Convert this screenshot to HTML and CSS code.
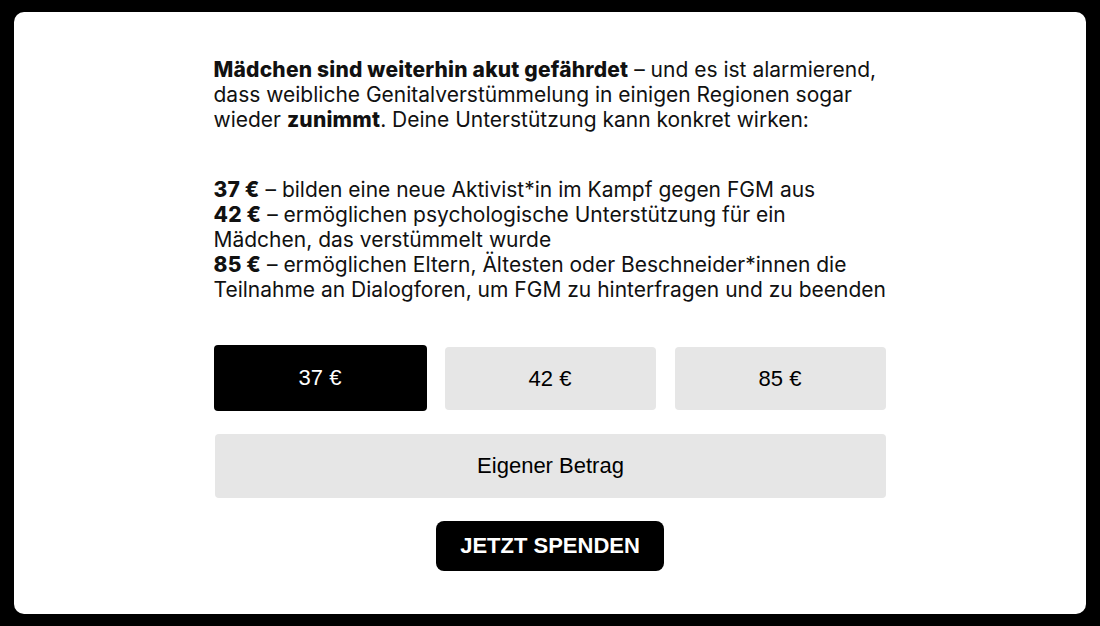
FILE: index.html
```html
<!DOCTYPE html>
<html lang="de">
<head>
    <meta charset="UTF-8" />
    <meta name="viewport" content="width=device-width, initial-scale=1.0"/>
    <title>Jetzt spenden</title>
    <link rel="stylesheet" href="styles.css">
</head>
<body>
    <div class="card">
        <div class="donate">
            <p class="intro"><strong>Mädchen sind weiterhin akut gefährdet</strong> – und es ist alarmierend, dass weibliche Genitalverstümmelung in einigen Regionen sogar wieder <strong>zunimmt</strong>. Deine Unterstützung kann konkret wirken:</p>
            <p class="impact">
                <strong>37 €</strong> – bilden eine neue Aktivist*in im Kampf gegen FGM aus<br>
                <strong>42 €</strong> – ermöglichen psychologische Unterstützung für ein Mädchen, das verstümmelt wurde<br>
                <strong>85 €</strong> – ermöglichen Eltern, Ältesten oder Beschneider*innen die Teilnahme an Dialogforen, um FGM zu hinterfragen und zu beenden
            </p>
            <div class="amounts">
                <button class="amount active">37 €</button>
                <button class="amount">42 €</button>
                <button class="amount">85 €</button>
            </div>
            <button class="amount custom">Eigener Betrag</button>
            <button class="submit">JETZT SPENDEN</button>
        </div>
    </div>
</body>
</html>
```

FILE: styles.css
```css
* {
    margin: 0;
    padding: 0;
    box-sizing: border-box;
}

body {
    background: #000;
    height: 626px;
    padding: 12px 14px;
    font-family: 'Inter', 'Liberation Sans', sans-serif;
    color: #111;
}

.card {
    background: #fff;
    border-radius: 10px;
    height: 602px;
    display: flex;
    justify-content: center;
    padding-top: 45px;
}

.donate {
    width: 673px;
    display: flex;
    flex-direction: column;
    align-items: center;
}

.intro,
.impact {
    width: 100%;
    font-size: 21px;
    line-height: 25px;
}

.intro strong,
.impact strong {
    font-weight: 800;
    letter-spacing: 0.2px;
}

.impact {
    margin-top: 45px;
}

.amounts {
    width: 100%;
    display: grid;
    grid-template-columns: repeat(3, 1fr);
    gap: 19px;
    margin-top: 45px;
    padding: 0 1px;
}

.amount {
    height: 63px;
    border: none;
    border-radius: 4px;
    background: #e6e6e6;
    color: #000;
    font-family: 'Liberation Sans', Arial, sans-serif;
    font-size: 22px;
}

.amount.active {
    background: #000;
    color: #fff;
    margin: -2px -1px -1px;
    height: 66px;
}

.custom {
    width: 671px;
    height: 64px;
    margin-top: 24px;
    margin-left: 1px;
}

.submit {
    margin-top: 23px;
    width: 228px;
    height: 50px;
    border: none;
    border-radius: 8px;
    background: #000;
    color: #fff;
    font-family: 'Liberation Sans', Arial, sans-serif;
    font-weight: 700;
    font-size: 22px;
}
```
